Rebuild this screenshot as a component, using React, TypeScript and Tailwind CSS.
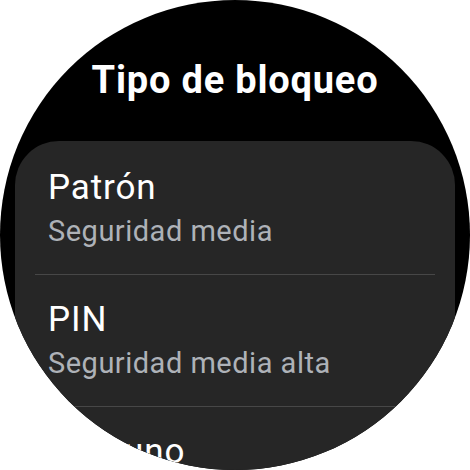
const items = [
  { title: "Patrón", subtitle: "Seguridad media" },
  { title: "PIN", subtitle: "Seguridad media alta" },
  { title: "Ninguno", subtitle: "Sin seguridad" },
];

export default function App() {
  return (
    <div className="w-[470px] h-[470px] bg-white" style={{ fontFamily: "Roboto, 'Noto Sans', sans-serif" }}>
      <div className="w-full h-full rounded-full bg-black overflow-hidden">
        <div className="pt-[57px] text-center text-white font-bold text-[38px] leading-[46px] tracking-[0.8px]">
          Tipo de bloqueo
        </div>
        <div className="mt-[38px] mx-[15px] rounded-t-[44px] bg-[#262626] pt-[2px]">
          {items.map((item, i) => (
            <div key={i}>
              <div className="pl-[33px] pt-[24px] pb-[25px]">
                <div className="text-white text-[35px] leading-[42px] tracking-[0.9px]">{item.title}</div>
                <div className="mt-[4px] text-[#aeb2b8] text-[29px] leading-[36px] tracking-[0.5px]">{item.subtitle}</div>
              </div>
              <div className="mx-[20px] h-px bg-[#474747]" />
            </div>
          ))}
        </div>
      </div>
    </div>
  );
}
